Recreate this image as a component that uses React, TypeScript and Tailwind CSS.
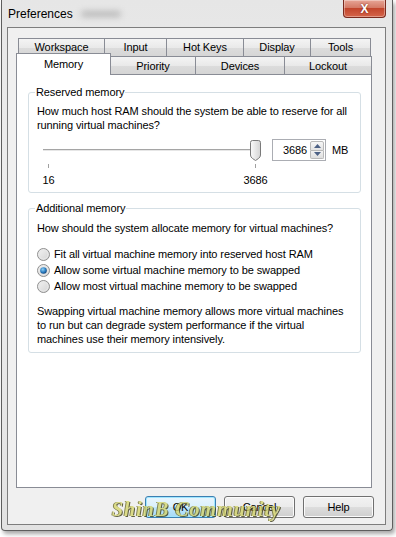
import React from 'react';

const backTabs = [
  { label: 'Workspace', w: 'w-[87px]' },
  { label: 'Input', w: 'w-[63px]' },
  { label: 'Hot Keys', w: 'w-[78px]' },
  { label: 'Display', w: 'w-[68px]' },
  { label: 'Tools', w: 'w-[61px]' },
];

const frontTabs = [
  { label: 'Priority', w: 'w-[86px]' },
  { label: 'Devices', w: 'w-[90px]' },
  { label: 'Lockout', w: 'w-[88px]' },
];

const radios = [
  { label: 'Fit all virtual machine memory into reserved host RAM', checked: false },
  { label: 'Allow some virtual machine memory to be swapped', checked: true },
  { label: 'Allow most virtual machine memory to be swapped', checked: false },
];

// Win7 style radio bullet
function Radio({ checked }: { checked: boolean }) {
  return (
    <svg width="13" height="13" viewBox="0 0 13 13" className="shrink-0">
      <defs>
        <linearGradient id="rb" x1="0" y1="0" x2="1" y2="1">
          <stop offset="0" stopColor="#f4f4f4" />
          <stop offset="1" stopColor="#d2d2d2" />
        </linearGradient>
        <radialGradient id="rd" cx="0.4" cy="0.35" r="0.7">
          <stop offset="0" stopColor="#8fd0f5" />
          <stop offset="0.6" stopColor="#2a7cc0" />
          <stop offset="1" stopColor="#0e3f75" />
        </radialGradient>
      </defs>
      <circle cx="6.5" cy="6.5" r="6" fill="url(#rb)" stroke="#8f8f8f" />
      <circle cx="6.5" cy="6.5" r="4.5" fill="none" stroke="#e8e8e8" />
      {checked && <circle cx="6.5" cy="6.5" r="3.3" fill="url(#rd)" />}
    </svg>
  );
}

function SliderThumb() {
  return (
    <svg width="11" height="21" viewBox="0 0 11 21">
      <defs>
        <linearGradient id="th" x1="0" y1="0" x2="1" y2="0">
          <stop offset="0" stopColor="#fbfbfb" />
          <stop offset="1" stopColor="#d4d4d4" />
        </linearGradient>
      </defs>
      <path
        d="M0.5 2.5 Q0.5 0.5 2.5 0.5 H8.5 Q10.5 0.5 10.5 2.5 V15 Q10.5 17 8.5 18.5 L5.5 20.5 L2.5 18.5 Q0.5 17 0.5 15 Z"
        fill="url(#th)"
        stroke="#7a7a7a"
      />
    </svg>
  );
}

function Button({ label, primary }: { label: string; primary?: boolean }) {
  return (
    <button
      className={
        primary
          ? 'w-[71px] h-[22px] rounded-[3px] border border-[#3c7fb1] bg-[linear-gradient(to_bottom,#eaf6fd,#d9f0fc_50%,#bee6fd_51%,#a7d9f5)] shadow-[inset_0_0_0_1px_#9fe6ff] text-black'
          : 'w-[71px] h-[22px] rounded-[3px] border border-[#707070] bg-[linear-gradient(to_bottom,#f2f2f2,#ebebeb_50%,#dddddd_51%,#cfcfcf)] shadow-[inset_0_0_0_1px_#fbfbfb] text-black'
      }
    >
      {label}
    </button>
  );
}

export default function App() {
  return (
    <div className="w-[396px] h-[537px] bg-white overflow-hidden font-['Liberation_Sans',Arial,sans-serif] text-[11px] tracking-[-0.1px] text-black leading-[14px]">
      {/* window frame */}
      <div className="ml-[1px] w-[392px] h-[531px] flex flex-col border border-t-0 border-[#5e5e5e] rounded-b-[4px] bg-[linear-gradient(to_bottom,#e6e6e6,#eeeeee_40%,#e2e2e2)] pl-[5px] pr-[6px] pb-[5px] shadow-[2px_3px_4px_rgba(0,0,0,0.35)]">
        {/* title bar */}
        <div className="h-[27px] flex items-start justify-between">
          <div className="flex items-center h-[27px] pl-[1px]">
            <span className="text-[12px] tracking-normal text-black">Preferences</span>
            <span className="ml-[8px] w-[40px] h-[6px] rounded-full bg-[#8a8a8a] opacity-50 blur-[3px]" />
          </div>
          <div className="w-[43px] h-[18px] rounded-b-[4px] border border-t-0 border-[#7a2a1e] bg-[linear-gradient(to_bottom,#e7a596,#d47a66_45%,#c2452c_50%,#d5654a)] shadow-[inset_0_0_0_1px_rgba(255,255,255,0.35)] flex items-center justify-center">
            <span className="text-white font-bold text-[12px] leading-none [text-shadow:0_0_2px_#6a1a10]">X</span>
          </div>
        </div>

        {/* client area */}
        <div className="flex-1 flex flex-col border border-[#7d7d7d] bg-[#f0f0f0] pl-[8px] pt-[10px]">
          {/* tabs */}
          <div className="w-[356px]">
            <div className="flex pl-[2px] h-[18px]">
              {backTabs.map((t, i) => (
                <div
                  key={t.label}
                  className={`${t.w} ${i > 0 ? '-ml-px' : ''} h-[19px] border border-b-0 border-[#898c95] bg-[linear-gradient(to_bottom,#f4f4f4,#e9e9e9_50%,#dcdcdc_51%,#d5d5d5)] flex justify-center pt-[1px]`}
                >
                  {t.label}
                </div>
              ))}
            </div>
            <div className="relative z-10 flex items-end h-[18px]">
              <div className="w-[95px] h-[22px] -mb-px border border-b-0 border-[#898c95] bg-white flex justify-center pt-[3px]">
                Memory
              </div>
              {frontTabs.map(t => (
                <div
                  key={t.label}
                  className={`${t.w} -ml-px h-[18px] border border-b-0 border-[#898c95] bg-[linear-gradient(to_bottom,#f4f4f4,#e9e9e9_50%,#dcdcdc_51%,#d5d5d5)] flex items-center justify-center pt-px`}
                >
                  {t.label}
                </div>
              ))}
            </div>

            {/* tab page */}
            <div className="h-[414px] border border-[#898c95] bg-white pl-[11px] pt-[10px]">
              <fieldset className="w-[333px] border border-[#d5dfe5] rounded-[3px] pl-[8px] pb-[5px]">
                <legend className="-ml-[2px] px-[1px]">Reserved memory</legend>
                <p className="pt-[5px]">
                  How much host RAM should the system be able to reserve for all
                  <br />
                  running virtual machines?
                </p>
                <div className="mt-[7px] flex items-center h-[22px]">
                  <div className="relative ml-[6px] w-[218px] h-[22px]">
                    <div className="absolute left-0 right-[5px] top-[10px] h-[2px] border-t border-[#a5a5a5] bg-[#e6e6e6]" />
                    <div className="absolute right-0 top-px">
                      <SliderThumb />
                    </div>
                  </div>
                  <div className="ml-[11px] w-[54px] h-[22px] border border-[#abadb3] bg-white flex">
                    <div className="flex-1 flex items-center justify-end pr-[3px]">3686</div>
                    <div className="w-[15px] flex flex-col py-px pr-px">
                      <div className="flex-1 border border-[#b9b9b9] rounded-t-[2px] bg-[linear-gradient(to_bottom,#f7f7f7,#e3e3e3)] flex items-center justify-center">
                        <svg width="7" height="4" viewBox="0 0 7 4">
                          <path d="M0 4 L3.5 0 L7 4 Z" fill="#4d6185" />
                        </svg>
                      </div>
                      <div className="flex-1 border border-t-0 border-[#b9b9b9] rounded-b-[2px] bg-[linear-gradient(to_bottom,#f2f2f2,#dedede)] flex items-center justify-center">
                        <svg width="7" height="4" viewBox="0 0 7 4">
                          <path d="M0 0 L3.5 4 L7 0 Z" fill="#4d6185" />
                        </svg>
                      </div>
                    </div>
                  </div>
                  <span className="ml-[6px]">MB</span>
                </div>
                <div className="ml-[6px] w-[218px] px-[5px] mt-[3px] flex justify-between">
                  <div className="w-px h-[4px] bg-[#a0a0a0]" />
                  <div className="w-px h-[4px] bg-[#a0a0a0]" />
                </div>
                <div className="ml-[6px] w-[218px] px-[5px] mt-[5px] flex justify-between">
                  <div className="w-px flex justify-center whitespace-nowrap">16</div>
                  <div className="w-px flex justify-center whitespace-nowrap">3686</div>
                </div>
              </fieldset>

              <fieldset className="mt-[8px] w-[333px] border border-[#d5dfe5] rounded-[3px] pl-[8px] pb-[6px]">
                <legend className="-ml-[2px] px-[1px]">Additional memory</legend>
                <p className="pt-[6px]">How should the system allocate memory for virtual machines?</p>
                <div className="mt-[11px] flex flex-col">
                  {radios.map(r => (
                    <div key={r.label} className="h-[16px] flex items-center gap-[4px]">
                      <Radio checked={r.checked} />
                      <span>{r.label}</span>
                    </div>
                  ))}
                </div>
                <p className="mt-[10px]">
                  Swapping virtual machine memory allows more virtual machines
                  <br />
                  to run but can degrade system performance if the virtual
                  <br />
                  machines use their memory intensively.
                </p>
              </fieldset>
            </div>
          </div>

          {/* dialog buttons */}
          <div className="relative mt-[8px] flex justify-end gap-[8px] pr-[11px]">
            <Button label="OK" primary />
            <Button label="Cancel" />
            <Button label="Help" />
            <span className="absolute left-[96px] top-[2px] font-['Liberation_Serif',serif] italic font-bold text-[20px] leading-[22px] tracking-[1px] text-[#d6d66e] opacity-80 [text-shadow:1px_1px_0_#3d3d1a,-1px_0_0_#6b6b2a]">
              ShinB Community
            </span>
          </div>
        </div>
      </div>
    </div>
  );
}
